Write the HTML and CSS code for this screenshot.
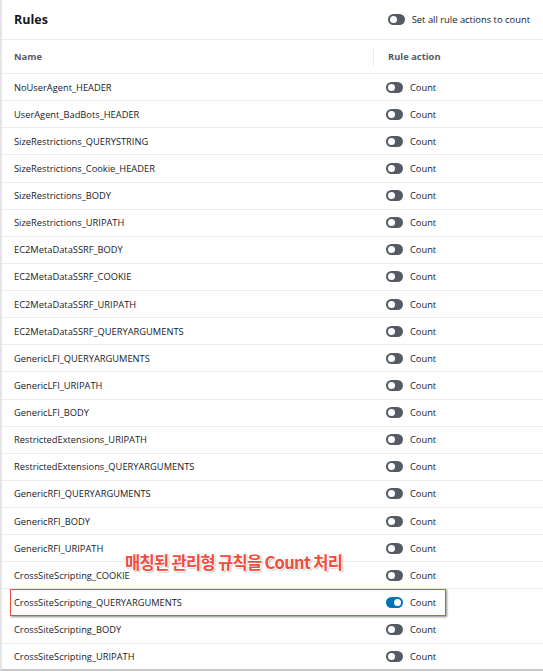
FILE: index.html
```html
<!DOCTYPE html>
<html lang="en">
<head>
    <meta charset="UTF-8">
    <title>Rules</title>
    <link rel="stylesheet" href="styles.css">
</head>
<body>
    <div class="panel">
        <div class="panel-header">
            <h2>Rules</h2>
            <label class="set-all"><span class="toggle"></span>Set all rule actions to count</label>
        </div>
        <div class="table">
            <div class="row head">
                <div class="cell name">Name</div>
                <div class="cell action">Rule action</div>
            </div>
            <div class="row"><div class="cell name">NoUserAgent_HEADER</div><div class="cell action"><span class="toggle"></span>Count</div></div>
            <div class="row"><div class="cell name">UserAgent_BadBots_HEADER</div><div class="cell action"><span class="toggle"></span>Count</div></div>
            <div class="row"><div class="cell name">SizeRestrictions_QUERYSTRING</div><div class="cell action"><span class="toggle"></span>Count</div></div>
            <div class="row"><div class="cell name">SizeRestrictions_Cookie_HEADER</div><div class="cell action"><span class="toggle"></span>Count</div></div>
            <div class="row"><div class="cell name">SizeRestrictions_BODY</div><div class="cell action"><span class="toggle"></span>Count</div></div>
            <div class="row"><div class="cell name">SizeRestrictions_URIPATH</div><div class="cell action"><span class="toggle"></span>Count</div></div>
            <div class="row"><div class="cell name">EC2MetaDataSSRF_BODY</div><div class="cell action"><span class="toggle"></span>Count</div></div>
            <div class="row"><div class="cell name">EC2MetaDataSSRF_COOKIE</div><div class="cell action"><span class="toggle"></span>Count</div></div>
            <div class="row"><div class="cell name">EC2MetaDataSSRF_URIPATH</div><div class="cell action"><span class="toggle"></span>Count</div></div>
            <div class="row"><div class="cell name">EC2MetaDataSSRF_QUERYARGUMENTS</div><div class="cell action"><span class="toggle"></span>Count</div></div>
            <div class="row"><div class="cell name">GenericLFI_QUERYARGUMENTS</div><div class="cell action"><span class="toggle"></span>Count</div></div>
            <div class="row"><div class="cell name">GenericLFI_URIPATH</div><div class="cell action"><span class="toggle"></span>Count</div></div>
            <div class="row"><div class="cell name">GenericLFI_BODY</div><div class="cell action"><span class="toggle"></span>Count</div></div>
            <div class="row"><div class="cell name">RestrictedExtensions_URIPATH</div><div class="cell action"><span class="toggle"></span>Count</div></div>
            <div class="row"><div class="cell name">RestrictedExtensions_QUERYARGUMENTS</div><div class="cell action"><span class="toggle"></span>Count</div></div>
            <div class="row"><div class="cell name">GenericRFI_QUERYARGUMENTS</div><div class="cell action"><span class="toggle"></span>Count</div></div>
            <div class="row"><div class="cell name">GenericRFI_BODY</div><div class="cell action"><span class="toggle"></span>Count</div></div>
            <div class="row"><div class="cell name">GenericRFI_URIPATH</div><div class="cell action"><span class="toggle"></span>Count</div></div>
            <div class="row annotated"><div class="cell name">CrossSiteScripting_COOKIE</div><div class="cell action"><span class="toggle"></span>Count</div><div class="note">매칭된 관리형 규칙을 Count 처리</div></div>
            <div class="row highlight"><div class="cell name">CrossSiteScripting_QUERYARGUMENTS</div><div class="cell action"><span class="toggle on"></span>Count</div></div>
            <div class="row"><div class="cell name">CrossSiteScripting_BODY</div><div class="cell action"><span class="toggle"></span>Count</div></div>
            <div class="row"><div class="cell name">CrossSiteScripting_URIPATH</div><div class="cell action"><span class="toggle"></span>Count</div></div>
        </div>
    </div>
</body>
</html>
```

FILE: styles.css
```css
body {
    margin: 0;
    background: #fff;
    font-family: "Open Sans", Arial, sans-serif;
    color: #16191f;
}
.panel {
    height: 669px;
    border-left: 2px solid #e3e5e6;
    border-bottom: 2px solid #c4c8ca;
    overflow: hidden;
}
.panel-header {
    display: flex;
    align-items: center;
    justify-content: space-between;
    height: 40px;
    padding: 0 13px 0 12px;
    border-bottom: 1px solid #eaeded;
    box-sizing: border-box;
}
h2 {
    margin: 0;
    font-size: 12.5px;
    font-weight: 700;
}
.set-all {
    display: flex;
    align-items: center;
    font-size: 9.4px;
}
.toggle {
    display: inline-block;
    position: relative;
    width: 17px;
    height: 11px;
    border-radius: 6px;
    background: #545b64;
    margin-right: 7px;
}
.toggle::after {
    content: "";
    position: absolute;
    left: 2px;
    top: 2px;
    width: 7px;
    height: 7px;
    border-radius: 50%;
    background: #fff;
}
.toggle.on {
    background: #0073bb;
}
.toggle.on::after {
    left: 8px;
}
.row {
    display: flex;
    align-items: center;
    height: 27.14px;
    border-bottom: 1px solid #eaeded;
    box-sizing: border-box;
    font-size: 9.3px;
    position: relative;
}
.row.head {
    height: 34px;
    color: #545b64;
    font-weight: 700;
    font-size: 9.4px;
}
.cell.name {
    width: 359px;
    padding-left: 12px;
}
.row.head .cell.name {
    border-right: 1px solid #eaeded;
    height: 18px;
    line-height: 18px;
}
.cell.action {
    display: flex;
    align-items: center;
    padding-left: 13px;
}
.row.head .cell.action {
    padding-left: 14px;
}
.highlight {
    border-bottom-color: transparent;
}
.highlight::before {
    content: "";
    position: absolute;
    left: 8px;
    top: 0;
    width: 434px;
    height: 25px;
    border: 1.5px solid #ef4b3f;
    box-shadow: 1px 1px 2px rgba(0, 0, 0, 0.45);
}
.note {
    position: absolute;
    left: 123px;
    top: -12px;
    font-family: "Noto Sans CJK KR", "Noto Sans", sans-serif;
    font-size: 16.5px;
    font-weight: 700;
    color: #f04b3f;
    letter-spacing: -0.7px;
    text-shadow: 1px 0 #fff, -1px 0 #fff, 0 1px #fff, 0 -1px #fff, 1px 1px 2px rgba(0, 0, 0, 0.5);
}
```
